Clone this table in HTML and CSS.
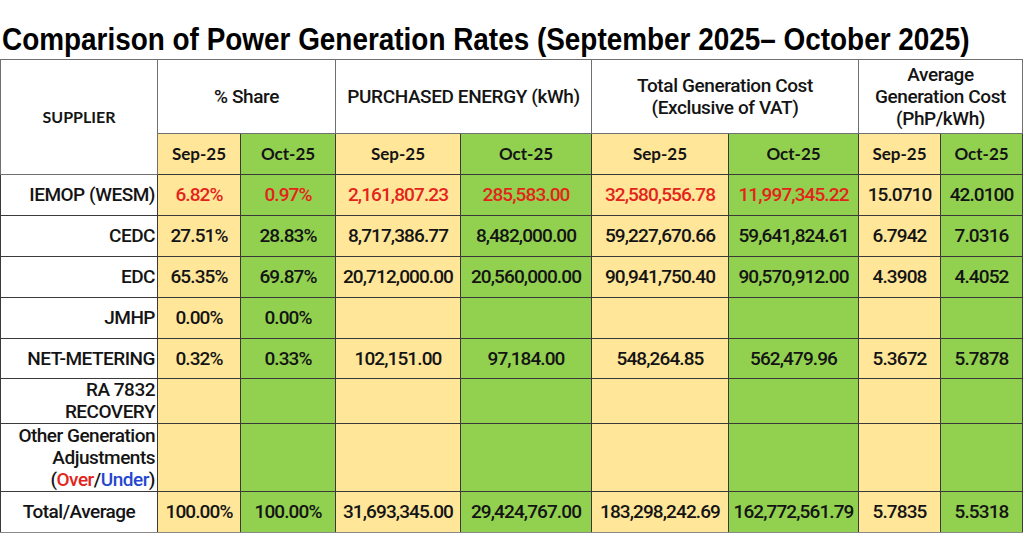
FILE: index.html
```html
<!DOCTYPE html>
<html lang="en">
<head>
<meta charset="utf-8">
<title>Comparison of Power Generation Rates</title>
<link rel="stylesheet" href="styles.css">
</head>
<body>
<h1 class="title"><span>Comparison of Power Generation Rates (September 2025– October 2025)</span></h1>
<table class="rates">
  <colgroup>
    <col class="c-sup"><col class="c-s1"><col class="c-s2"><col class="c-p1"><col class="c-p2"><col class="c-t1"><col class="c-t2"><col class="c-a1"><col class="c-a2">
  </colgroup>
  <thead>
    <tr class="h1">
      <th rowspan="2" class="sup">SUPPLIER</th>
      <th colspan="2">% Share</th>
      <th colspan="2">PURCHASED ENERGY (kWh)</th>
      <th colspan="2">Total Generation Cost<br>(Exclusive of VAT)</th>
      <th colspan="2">Average<br>Generation Cost<br>(PhP/kWh)</th>
    </tr>
    <tr class="h2">
      <th class="sep">Sep-25</th><th class="oct">Oct-25</th>
      <th class="sep">Sep-25</th><th class="oct">Oct-25</th>
      <th class="sep">Sep-25</th><th class="oct">Oct-25</th>
      <th class="sep">Sep-25</th><th class="oct">Oct-25</th>
    </tr>
  </thead>
  <tbody>
    <tr class="r41">
      <td class="lbl">IEMOP (WESM)</td>
      <td class="sep red">6.82%</td><td class="oct red">0.97%</td>
      <td class="sep red">2,161,807.23</td><td class="oct red">285,583.00</td>
      <td class="sep red">32,580,556.78</td><td class="oct red">11,997,345.22</td>
      <td class="sep">15.0710</td><td class="oct">42.0100</td>
    </tr>
    <tr class="r41">
      <td class="lbl">CEDC</td>
      <td class="sep">27.51%</td><td class="oct">28.83%</td>
      <td class="sep">8,717,386.77</td><td class="oct">8,482,000.00</td>
      <td class="sep">59,227,670.66</td><td class="oct">59,641,824.61</td>
      <td class="sep">6.7942</td><td class="oct">7.0316</td>
    </tr>
    <tr class="r41">
      <td class="lbl">EDC</td>
      <td class="sep">65.35%</td><td class="oct">69.87%</td>
      <td class="sep">20,712,000.00</td><td class="oct">20,560,000.00</td>
      <td class="sep">90,941,750.40</td><td class="oct">90,570,912.00</td>
      <td class="sep">4.3908</td><td class="oct">4.4052</td>
    </tr>
    <tr class="r41">
      <td class="lbl">JMHP</td>
      <td class="sep">0.00%</td><td class="oct">0.00%</td>
      <td class="sep"></td><td class="oct"></td>
      <td class="sep"></td><td class="oct"></td>
      <td class="sep"></td><td class="oct"></td>
    </tr>
    <tr class="r40">
      <td class="lbl">NET-METERING</td>
      <td class="sep">0.32%</td><td class="oct">0.33%</td>
      <td class="sep">102,151.00</td><td class="oct">97,184.00</td>
      <td class="sep">548,264.85</td><td class="oct">562,479.96</td>
      <td class="sep">5.3672</td><td class="oct">5.7878</td>
    </tr>
    <tr class="r45">
      <td class="lbl">RA 7832<br>RECOVERY</td>
      <td class="sep"></td><td class="oct"></td>
      <td class="sep"></td><td class="oct"></td>
      <td class="sep"></td><td class="oct"></td>
      <td class="sep"></td><td class="oct"></td>
    </tr>
    <tr class="r68">
      <td class="lbl">Other Generation<br>Adjustments<br>(<span class="over">Over</span>/<span class="under">Under</span>)</td>
      <td class="sep"></td><td class="oct"></td>
      <td class="sep"></td><td class="oct"></td>
      <td class="sep"></td><td class="oct"></td>
      <td class="sep"></td><td class="oct"></td>
    </tr>
    <tr class="r41 total">
      <td class="lbl ctr">Total/Average</td>
      <td class="sep">100.00%</td><td class="oct">100.00%</td>
      <td class="sep">31,693,345.00</td><td class="oct">29,424,767.00</td>
      <td class="sep">183,298,242.69</td><td class="oct">162,772,561.79</td>
      <td class="sep">5.7835</td><td class="oct">5.5318</td>
    </tr>
  </tbody>
</table>
</body>
</html>
```
FILE: styles.css
```css
html, body {
  margin: 0;
  padding: 0;
  background: #ffffff;
}

body {
  font-family: Roboto, "Liberation Sans", sans-serif;
  color: #111111;
}

.title {
  margin: 0 0 2px 0;
  padding: 21px 0 0 2px;
  height: 36px;
  width: 1022px;
  overflow: hidden;
  font-family: "Liberation Sans", Arial, sans-serif;
  font-weight: 700;
  font-size: 32px;
  line-height: 36px;
  white-space: nowrap;
  color: #000000;
}

.title span {
  display: inline-block;
  transform: scaleX(0.872);
  transform-origin: left center;
}

.rates {
  border-collapse: collapse;
  table-layout: fixed;
  width: 1022px;
  font-size: 19px;
  font-weight: 500;
  letter-spacing: -0.9px;
  color: #141414;
}

.c-sup { width: 157px; }
.c-s1 { width: 83px; }
.c-s2 { width: 95px; }
.c-p1 { width: 125px; }
.c-p2 { width: 131px; }
.c-t1 { width: 137px; }
.c-t2 { width: 130px; }
.c-a1 { width: 82px; }
.c-a2 { width: 82px; }

.rates th,
.rates td {
  border: 1px solid #3a3a3a;
  padding: 0;
  text-align: center;
  vertical-align: middle;
  line-height: 22px;
  white-space: nowrap;
  overflow: hidden;
}

.rates .h1 { height: 74px; }
.rates .h1 th {
  font-weight: 500;
  letter-spacing: -0.4px;
  background: #ffffff;
  border-color: #707070;
  color: #141414;
}

.rates .h1 th.sup {
  font-family: Lato, "Open Sans", sans-serif;
  font-weight: 700;
  font-size: 16px;
  letter-spacing: 0;
}

.rates .h2 { height: 41px; }
.rates .h2 th {
  font-family: Lato, "Open Sans", sans-serif;
  font-weight: 700;
  font-size: 17px;
  letter-spacing: 0;
}

.r41 { height: 41px; }
.r40 { height: 40px; }
.r45 { height: 45px; }
.r68 { height: 68px; }

.sep { background: #ffe699; }
.oct { background: #92d050; }

.red { color: #e3241b; }

.rates .lbl {
  background: #ffffff;
  text-align: right;
  padding-right: 2px;
  letter-spacing: -0.5px;
}

.rates .lbl.ctr {
  text-align: center;
  padding-right: 0;
}

.over { color: #e3241b; }
.under { color: #2446d0; }

.rates .total td {
  border-bottom-color: #8a8a8a;
}
```
